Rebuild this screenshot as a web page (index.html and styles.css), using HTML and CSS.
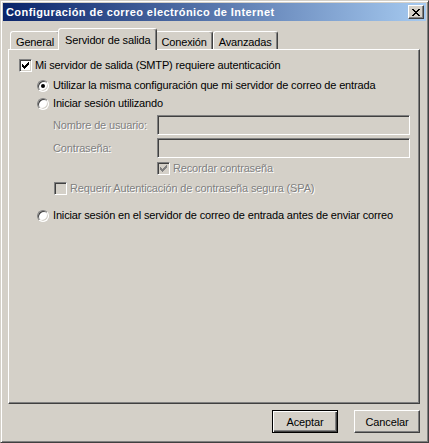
FILE: index.html
```html
<!DOCTYPE html>
<html lang="es">
<head>
<meta charset="utf-8">
<title>Configuración de correo electrónico de Internet</title>
<link rel="stylesheet" href="styles.css">
</head>
<body>
<div class="window">
  <div class="titlebar">
    <span class="title">Configuración de correo electrónico de Internet</span>
    <span class="close"><svg width="8" height="7" viewBox="0 0 8 7"><path fill="#000" d="M0 0h2v1H0z M6 0h2v1H6z M1 1h2v1H1z M5 1h2v1H5z M2 2h4v1H2z M3 3h2v1H3z M2 4h4v1H2z M1 5h2v1H1z M5 5h2v1H5z M0 6h2v1H0z M6 6h2v1H6z"/></svg></span>
  </div>
  <div class="content">
    <div class="tabs">
      <div class="tab">General</div>
      <div class="tab active">Servidor de salida</div>
      <div class="tab">Conexión</div>
      <div class="tab">Avanzadas</div>
    </div>
    <div class="panel">
      <div class="row">
        <span class="check"><svg width="7" height="7" viewBox="0 0 7 7"><path fill="#000" d="M0 2h1v3H0z M1 3h1v3H1z M2 4h1v3H2z M3 3h1v3H3z M4 2h1v3H4z M5 1h1v3H5z M6 0h1v3H6z"/></svg></span>
        <span class="lbl">Mi servidor de salida (SMTP) requiere autenticación</span>
      </div>
      <div class="row opt r-first">
        <span class="radio on"></span>
        <span class="lbl-r">Utilizar la misma configuración que mi servidor de correo de entrada</span>
      </div>
      <div class="row opt r-second">
        <span class="radio"></span>
        <span class="lbl-r">Iniciar sesión utilizando</span>
      </div>
      <div class="field f-first">
        <span class="flabel dis">Nombre de usuario:</span>
        <span class="input"></span>
      </div>
      <div class="field f-second">
        <span class="flabel dis">Contraseña:</span>
        <span class="input"></span>
      </div>
      <div class="row remember">
        <span class="check disabled"><svg width="7" height="7" viewBox="0 0 7 7"><path fill="#808080" d="M0 2h1v3H0z M1 3h1v3H1z M2 4h1v3H2z M3 3h1v3H3z M4 2h1v3H4z M5 1h1v3H5z M6 0h1v3H6z"/></svg></span>
        <span class="lbl dis">Recordar contraseña</span>
      </div>
      <div class="row spa">
        <span class="check disabled"></span>
        <span class="lbl dis">Requerir Autenticación de contraseña segura (SPA)</span>
      </div>
      <div class="row opt r-third">
        <span class="radio"></span>
        <span class="lbl-r">Iniciar sesión en el servidor de correo de entrada antes de enviar correo</span>
      </div>
    </div>
    <div class="buttons">
      <button class="btn default">Aceptar</button>
      <button class="btn">Cancelar</button>
    </div>
  </div>
</div>
</body>
</html>
```
FILE: styles.css
```css
* { box-sizing: border-box; }
html, body { margin: 0; padding: 0; }
body {
  background: #d4d0c8;
  font-family: "Liberation Sans", Arial, sans-serif;
  font-size: 11px;
  letter-spacing: -0.15px;
  color: #000;
}
.window {
  width: 429px;
  height: 443px;
  border: 1px solid;
  border-color: #d4d0c8 #404040 #404040 #d4d0c8;
  box-shadow: inset 1px 1px #fff, inset -1px -1px #808080;
  padding: 2px;
  display: flex;
  flex-direction: column;
}
.titlebar {
  height: 18px;
  flex: none;
  background: linear-gradient(to right, #0a246a, #a6caf0);
  display: flex;
  align-items: center;
  justify-content: space-between;
  padding: 0 2px 0 3px;
}
.title {
  color: #fff;
  font-weight: bold;
  letter-spacing: 0.42px;
  white-space: nowrap;
}
.close {
  width: 16px;
  height: 14px;
  background: #d4d0c8;
  border: 1px solid;
  border-color: #fff #404040 #404040 #fff;
  box-shadow: inset -1px -1px #808080;
  display: flex;
  align-items: center;
  justify-content: center;
}
.close svg, .check svg { display: block; }
.content {
  flex: 1;
  padding: 7px 6px 0 5px;
  display: flex;
  flex-direction: column;
}
.tabs {
  display: flex;
  align-items: flex-end;
  padding-left: 2px;
  height: 21px;
  position: relative;
  z-index: 1;
}
.tab {
  height: 18px;
  padding: 2px 5px 0;
  border: 1px solid;
  border-bottom: none;
  border-color: #fff #404040 transparent #fff;
  box-shadow: inset -1px 0 #808080;
  border-radius: 3px 3px 0 0;
  background: #d4d0c8;
  display: flex;
  align-items: center;
  white-space: nowrap;
}
.tab.active {
  height: 22px;
  margin: 0 -2px -1px;
  padding: 0 6px;
  position: relative;
  z-index: 2;
}
.panel {
  height: 355px;
  flex: none;
  border: 1px solid;
  border-color: #fff #404040 #404040 #fff;
  box-shadow: inset -1px -1px #808080;
  padding: 9px 9px 0 10px;
  display: flex;
  flex-direction: column;
}
.row {
  display: flex;
  align-items: center;
  height: 13px;
  line-height: 13px;
  white-space: nowrap;
}
.check {
  width: 13px;
  height: 13px;
  flex: none;
  border: 1px solid;
  border-color: #808080 #fff #fff #808080;
  box-shadow: inset 1px 1px #404040, inset -1px -1px #d4d0c8;
  background: #fff;
  display: flex;
  align-items: center;
  justify-content: center;
}
.check.disabled { background: #d4d0c8; }
.lbl { margin-left: 3px; }
.radio {
  width: 12px;
  height: 12px;
  flex: none;
  border-radius: 50%;
  border: 1px solid;
  border-color: #808080 #fff #fff #808080;
  box-shadow: inset 1px 1px #404040, inset -1px -1px #d4d0c8;
  background: #fff;
  display: flex;
  align-items: center;
  justify-content: center;
}
.radio.on::after {
  content: "";
  width: 4px;
  height: 4px;
  border-radius: 50%;
  background: #000;
}
.lbl-r { margin-left: 4px; }
.opt { margin-left: 18px; }
.r-first { margin-top: 7px; }
.r-second { margin-top: 5px; }
.r-third { margin-top: 14px; }
.field {
  display: flex;
  align-items: center;
  height: 20px;
  margin-left: 34px;
}
.f-first { margin-top: 5px; }
.f-second { margin-top: 3px; }
.flabel { width: 104px; flex: none; white-space: nowrap; }
.input {
  flex: 1;
  height: 20px;
  border: 1px solid;
  border-color: #808080 #fff #fff #808080;
  box-shadow: inset 1px 1px #404040, inset -1px -1px #d4d0c8;
  background: #d4d0c8;
}
.dis { color: #808080; text-shadow: 1px 1px #fff; }
.remember { margin-top: 4px; margin-left: 138px; }
.spa { margin-top: 7px; margin-left: 35px; }
.buttons {
  display: flex;
  justify-content: flex-end;
  gap: 16px;
  margin-top: 6px;
}
.btn {
  width: 66px;
  height: 23px;
  padding: 0;
  font: inherit;
  letter-spacing: inherit;
  color: #000;
  background: #d4d0c8;
  border: 1px solid;
  border-color: #fff #404040 #404040 #fff;
  box-shadow: inset -1px -1px #808080;
}
.btn.default {
  border-color: #000;
  box-shadow: inset 1px 1px #fff, inset -1px -1px #404040, inset -2px -2px #808080;
}
```
